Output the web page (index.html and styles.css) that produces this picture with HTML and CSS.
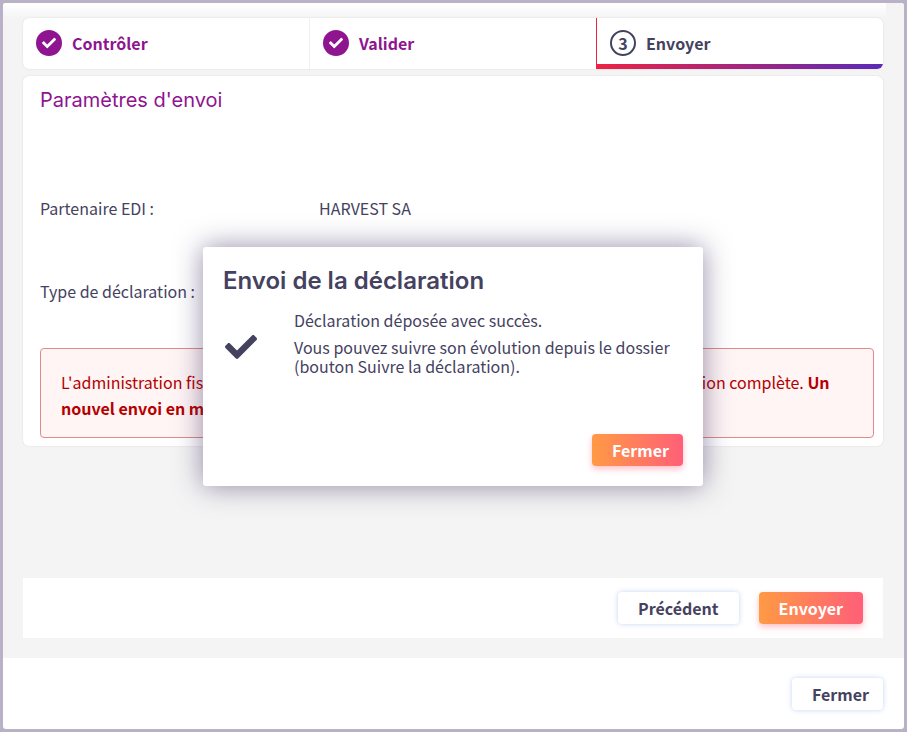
FILE: index.html
```html
<!DOCTYPE html>
<html lang="fr">

<head>
  <meta charset="UTF-8">
  <title>Envoi de la déclaration</title>
  <link rel="stylesheet" href="styles.css">
</head>

<body>
  <div class="window">
    <div class="wizard">
      <div class="wizard-inner">
        <div class="steps">
          <div class="step done">
            <span class="step-icon">
              <svg viewBox="0 0 512 512" width="14" height="14"><path d="M173.898 439.404l-166.4-166.4c-9.997-9.997-9.997-26.206 0-36.204l36.203-36.204c9.997-9.998 26.207-9.998 36.204 0L192 312.69 432.095 72.596c9.997-9.997 26.207-9.997 36.204 0l36.203 36.204c9.997 9.997 9.997 26.206 0 36.204l-294.4 294.401c-9.998 9.997-26.207 9.997-36.204-.001z"/></svg>
            </span>
            <span>Contrôler</span>
          </div>
          <div class="step done">
            <span class="step-icon">
              <svg viewBox="0 0 512 512" width="14" height="14"><path d="M173.898 439.404l-166.4-166.4c-9.997-9.997-9.997-26.206 0-36.204l36.203-36.204c9.997-9.998 26.207-9.998 36.204 0L192 312.69 432.095 72.596c9.997-9.997 26.207-9.997 36.204 0l36.203 36.204c9.997 9.997 9.997 26.206 0 36.204l-294.4 294.401c-9.998 9.997-26.207 9.997-36.204-.001z"/></svg>
            </span>
            <span>Valider</span>
          </div>
          <div class="step active">
            <span class="step-icon">3</span>
            <span>Envoyer</span>
          </div>
        </div>

        <div class="panel">
          <h2>Paramètres d'envoi</h2>
          <div class="field field-first">
            <span class="field-label">Partenaire EDI :</span>
            <span>HARVEST SA</span>
          </div>
          <div class="field">
            <span class="field-label">Type de déclaration :</span>
          </div>
          <div class="alert">
            L'administration fiscale considère cet envoi comme un test et non comme une déclaration complète.
            <strong>Un nouvel envoi en mode réel sera indispensable.</strong>
          </div>
        </div>

        <div class="actions">
          <button type="button" class="btn">Précédent</button>
          <button type="button" class="btn btn-primary">Envoyer</button>
        </div>
      </div>
    </div>

    <div class="window-footer">
      <button type="button" class="btn btn-close">Fermer</button>
    </div>
  </div>

  <div class="modal">
    <h1>Envoi de la déclaration</h1>
    <div class="modal-body">
      <svg class="modal-icon" viewBox="0 0 512 512" width="32" height="32"><path d="M173.898 439.404l-166.4-166.4c-9.997-9.997-9.997-26.206 0-36.204l36.203-36.204c9.997-9.998 26.207-9.998 36.204 0L192 312.69 432.095 72.596c9.997-9.997 26.207-9.997 36.204 0l36.203 36.204c9.997 9.997 9.997 26.206 0 36.204l-294.4 294.401c-9.998 9.997-26.207 9.997-36.204-.001z"/></svg>
      <div class="modal-text">
        <p>Déclaration déposée avec succès.</p>
        <p>Vous pouvez suivre son évolution depuis le dossier<br>(bouton Suivre la déclaration).</p>
      </div>
    </div>
    <div class="modal-footer">
      <button type="button" class="btn btn-primary btn-modal">Fermer</button>
    </div>
  </div>
</body>

</html>
```

FILE: styles.css
```css
* {
  box-sizing: border-box;
}

body {
  font-family: 'Noto Sans CJK JP', 'Noto Sans', sans-serif;
  font-size: 16px;
  margin: 0;
  padding: 3px;
  height: 732px;
  overflow: hidden;
  background-color: #b9b1c5;
  color: #45425f;
}

.window {
  display: flex;
  flex-direction: column;
  height: 100%;
  background-color: #ffffff;
  border-radius: 3px;
  overflow: hidden;
}

.wizard {
  height: 655px;
  background-color: #f4f4f4;
}

.wizard-inner {
  width: 883px;
  height: 100%;
  padding: 15px 3px 20px 20px;
  background: linear-gradient(#ffffff, #f4f4f4 15px);
}

.steps {
  display: flex;
  height: 51px;
  background-color: #ffffff;
  border-radius: 6px;
  box-shadow: 0 0 2px rgba(0, 0, 0, 0.12);
  overflow: hidden;
}

.step {
  flex: 1;
  display: flex;
  align-items: flex-start;
  gap: 10px;
  padding: 12px 13px 0;
  font-weight: 700;
  font-size: 16px;
  line-height: 26px;
  border-left: 1px solid #f0f0f0;
}

.step:first-child {
  border-left: none;
}

.step.done {
  color: #8e1490;
}

.step-icon {
  display: flex;
  width: 26px;
  height: 26px;
  border-radius: 50%;
  align-items: center;
  justify-content: center;
  flex-shrink: 0;
}

.step.done .step-icon {
  background-color: #8e1490;
}

.step.done svg {
  fill: #ffffff;
}

.step.active {
  border-bottom: 5px solid;
  border-image: linear-gradient(90deg, #ee2244, #5a2ab8) 1;
}

.step.active .step-icon {
  border: 2px solid #45425f;
  line-height: 22px;
}

.panel {
  height: 370px;
  margin-top: 7px;
  padding: 10px 9px 0 17px;
  background-color: #ffffff;
  border-radius: 6px;
  box-shadow: 0 0 2px rgba(0, 0, 0, 0.12);
}

.panel h2 {
  margin: 0;
  font-family: 'Inter', sans-serif;
  font-size: 20px;
  font-weight: 400;
  line-height: 28px;
  color: #8e1490;
}

.field {
  display: grid;
  grid-template-columns: 279px 1fr;
  line-height: 24px;
  margin-top: 59px;
}

.field-first {
  margin-top: 82px;
}

.alert {
  height: 90px;
  margin-top: 45px;
  padding: 20px;
  line-height: 26px;
  color: #b50000;
  background-color: #fff5f5;
  border: 1px solid #e08a8a;
  border-radius: 4px;
}

.actions {
  display: flex;
  justify-content: flex-end;
  gap: 20px;
  height: 60px;
  margin-top: 132px;
  padding: 14px 20px;
  background-color: #ffffff;
}

.btn {
  height: 32px;
  padding: 0 20px;
  border: none;
  border-radius: 4px;
  font-family: inherit;
  font-size: 16px;
  font-weight: 700;
  color: #45425f;
  background-color: #ffffff;
  box-shadow: 0 0 5px rgba(90, 130, 220, 0.35);
}

.btn-primary {
  color: #ffffff;
  background: linear-gradient(90deg, #ff9a44, #ff5f78);
  box-shadow: 0 3px 6px rgba(255, 95, 120, 0.4);
}

.window-footer {
  flex: 1;
  display: flex;
  justify-content: flex-end;
  align-items: flex-start;
  padding: 20px 21px;
}

.btn-close {
  width: 91px;
}

.modal {
  position: absolute;
  left: 203px;
  top: 247px;
  width: 500px;
  height: 239px;
  padding: 20px;
  display: flex;
  flex-direction: column;
  background-color: #ffffff;
  border-radius: 3px;
  box-shadow: 0 0 28px rgba(60, 45, 95, 0.55);
}

.modal h1 {
  margin: 0;
  font-family: 'Inter', sans-serif;
  font-size: 24px;
  font-weight: 600;
  line-height: 28px;
}

.modal-body {
  display: flex;
  flex: 1;
  margin-top: 16px;
}

.modal-icon {
  width: 32px;
  flex-shrink: 0;
  margin: 20px 0 0 2px;
  fill: #45425f;
}

.modal-text {
  margin-left: 37px;
  line-height: 19px;
}

.modal-text p {
  margin: 0 0 8px;
}

.modal-footer {
  display: flex;
  justify-content: flex-end;
}

.btn-modal {
  width: 91px;
}
```
